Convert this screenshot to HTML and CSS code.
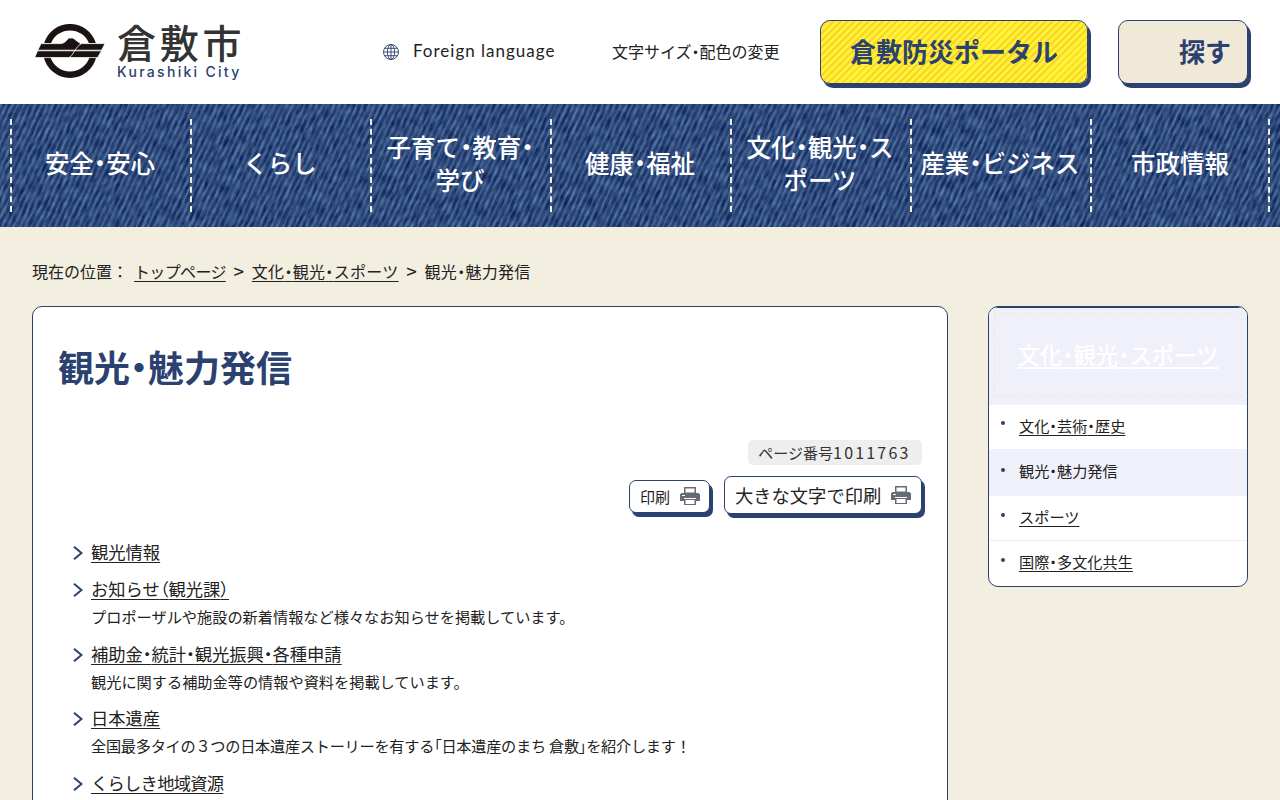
FILE: index.html
```html
<!DOCTYPE html>
<html lang="ja">
<head>
<meta charset="utf-8">
<title>観光・魅力発信</title>
<link rel="stylesheet" href="styles.css">
</head>
<body>
<header class="site-header">
  <a class="logo" href="#">
    <svg class="logo-mark" viewBox="0 0 70 54" width="70" height="54" aria-hidden="true">
      <g fill="#1a1311">
        <path d="M9.200 19A27 27 0 0 1 60.800 19H53.900A20.500 20.500 0 0 0 16.100 19Z"/>
        <path d="M8.700 33H15.400A20.500 20.500 0 0 0 54.600 33H61.300A27 27 0 0 1 8.700 33Z"/>
      </g>
      <g fill="#1a1311" stroke="#fff" stroke-width=".8">
        <path d="M41 19.600H70L66.600 26.200H36Z"/>
        <path d="M36 26.800H66.600L62.600 33.600H30Z"/>
        <path d="M6 19.600H25C29 19.600 31 17.500 33.500 14H38L46 20C43.500 21 42 23.500 40 26.200H2.800Z"/>
        <path d="M2.600 26.800H39.500C38 29.500 36 33.600 33 33.600H-.4Z"/>
      </g>
    </svg>
    <span class="logo-text">
      <span class="logo-ja">倉敷市</span>
      <span class="logo-en">Kurashiki City</span>
    </span>
  </a>
  <a class="foreign" href="#">
    <svg viewBox="0 0 16 16" width="16" height="16" aria-hidden="true" class="globe">
      <g fill="none" stroke="#2b4170" stroke-width=".9">
        <circle cx="8" cy="8" r="7.500"/>
        <ellipse cx="8" cy="8" rx="3.600" ry="7.500"/>
        <path d="M8 .5V15.500M.5 8H15.500M1.600 4.300H14.400M1.600 11.700H14.400"/>
      </g>
    </svg>
    <span>Foreign language</span>
  </a>
  <a class="textsize" href="#">文字サイズ<span class="p">・</span>配色の変更</a>
  <a class="btn-portal" href="#">倉敷防災ポータル</a>
  <a class="btn-search" href="#">探す</a>
</header>

<nav class="gnav">
  <svg class="denim" aria-hidden="true">
    <defs>
      <filter id="denim-noise" x="0" y="0" width="100%" height="100%" color-interpolation-filters="sRGB">
        <feTurbulence type="fractalNoise" baseFrequency="0.3 0.09" numOctaves="3" seed="7"/>
        <feColorMatrix type="matrix" values=".42 0 0 0 -.04  .46 0 0 0 .05  .42 0 0 0 .27  0 0 0 0 1"/>
      </filter>
      <pattern id="twill" width="5.300" height="40" patternUnits="userSpaceOnUse">
        <rect x="0" y="0" width="1.500" height="40" fill="#8fb0d6" fill-opacity=".28"/>
        <rect x="2.800" y="0" width="1.800" height="40" fill="#0f2450" fill-opacity=".32"/>
      </pattern>
    </defs>
    <g transform="rotate(25)">
      <rect x="-200" y="-800" width="1800" height="1400" filter="url(#denim-noise)"/>
      <rect x="-200" y="-800" width="1800" height="1400" fill="url(#twill)"/>
    </g>
  </svg>
  <a href="#"><span>安全<span class="p">・</span>安心</span></a>
  <a href="#"><span>くらし</span></a>
  <a href="#"><span>子育て<span class="p">・</span>教育<span class="p">・</span><br>学び</span></a>
  <a href="#"><span>健康<span class="p">・</span>福祉</span></a>
  <a href="#"><span>文化<span class="p">・</span>観光<span class="p">・</span>ス<br>ポーツ</span></a>
  <a href="#"><span>産業<span class="p">・</span>ビジネス</span></a>
  <a href="#"><span>市政情報</span></a>
</nav>

<main class="page">
  <div class="crumbs">
    <span>現在の位置：</span>
    <a class="top" href="#">トップページ</a>
    <span class="sep">&gt;</span>
    <a class="sec" href="#">文化<span class="p">・</span>観光<span class="p">・</span>スポーツ</a>
    <span class="sep">&gt;</span>
    <span class="here">観光<span class="p">・</span>魅力発信</span>
  </div>
  <div class="columns">
    <article class="content">
      <h1>観光<span class="p">・</span>魅力発信</h1>
      <div class="page-no-row"><span class="page-no">ページ番号<span class="num">1011763</span></span></div>
      <div class="print-row">
        <a class="print small" href="#">印刷
          <svg class="printer" viewBox="0 0 20 18" width="20" height="18" aria-hidden="true"><path d="M4 0H16V6H4ZM5.500 1.500V5.500H14.500V1.500Z" fill="#666c75" fill-rule="evenodd"/><path d="M2 6H18C19 6 20 7 20 8V14H16V11H4V14H0V8C0 7 1 6 2 6Z" fill="#666c75"/><path d="M4 12H16V18H4ZM5.500 13V17H14.500V13Z" fill="#666c75" fill-rule="evenodd"/><path d="M2 8H5V9H2Z" fill="#fff"/></svg>
        </a>
        <a class="print large" href="#">大きな文字で印刷
          <svg class="printer" viewBox="0 0 20 18" width="20" height="18" aria-hidden="true"><path d="M4 0H16V6H4ZM5.500 1.500V5.500H14.500V1.500Z" fill="#666c75" fill-rule="evenodd"/><path d="M2 6H18C19 6 20 7 20 8V14H16V11H4V14H0V8C0 7 1 6 2 6Z" fill="#666c75"/><path d="M4 12H16V18H4ZM5.500 13V17H14.500V13Z" fill="#666c75" fill-rule="evenodd"/><path d="M2 8H5V9H2Z" fill="#fff"/></svg>
        </a>
      </div>
      <ul class="links">
        <li><svg class="chev" viewBox="0 0 10 14" width="10" height="14" aria-hidden="true"><path d="M1 .8L8.500 7L1 13.200" fill="none" stroke="#2b4170" stroke-width="2"/></svg><a href="#">観光情報</a></li>
        <li><svg class="chev" viewBox="0 0 10 14" width="10" height="14" aria-hidden="true"><path d="M1 .8L8.500 7L1 13.200" fill="none" stroke="#2b4170" stroke-width="2"/></svg><a href="#">お知らせ<span class="p">（</span>観光課<span class="p">）</span></a><p>プロポーザルや施設の新着情報など様々なお知らせを掲載しています。</p></li>
        <li><svg class="chev" viewBox="0 0 10 14" width="10" height="14" aria-hidden="true"><path d="M1 .8L8.500 7L1 13.200" fill="none" stroke="#2b4170" stroke-width="2"/></svg><a href="#">補助金<span class="p">・</span>統計<span class="p">・</span>観光振興<span class="p">・</span>各種申請</a><p>観光に関する補助金等の情報や資料を掲載しています。</p></li>
        <li><svg class="chev" viewBox="0 0 10 14" width="10" height="14" aria-hidden="true"><path d="M1 .8L8.500 7L1 13.200" fill="none" stroke="#2b4170" stroke-width="2"/></svg><a href="#">日本遺産</a><p class="tight">全国最多タイの３つの日本遺産ストーリーを有する<span class="p">「</span>日本遺産のまち 倉敷<span class="p">」</span>を紹介します！</p></li>
        <li><svg class="chev" viewBox="0 0 10 14" width="10" height="14" aria-hidden="true"><path d="M1 .8L8.500 7L1 13.200" fill="none" stroke="#2b4170" stroke-width="2"/></svg><a class="narrow" href="#">くらしき地域資源</a></li>
      </ul>
    </article>
    <aside class="side">
      <div class="side-head"><div class="side-head-inner"><a href="#">文化<span class="p">・</span>観光<span class="p">・</span>スポーツ</a></div></div>
      <ul class="side-list">
        <li class="first"><a href="#">文化<span class="p">・</span>芸術<span class="p">・</span>歴史</a></li>
        <li class="current"><span>観光<span class="p">・</span>魅力発信</span></li>
        <li class="ruled"><a href="#">スポーツ</a></li>
        <li><a href="#">国際<span class="p">・</span>多文化共生</a></li>
      </ul>
    </aside>
  </div>
</main>
</body>
</html>
```
FILE: styles.css
```css
* { box-sizing: border-box; }
html, body { margin: 0; height: 800px; overflow: hidden; }
body {
  background: #f2eee0;
  color: #222;
  font-family: "Noto Sans CJK JP", "Noto Sans", sans-serif;
  font-size: 16px;
}
a { color: inherit; }
.p { font-feature-settings: "palt"; }
.site-header {
  height: 104px;
  background: #fff;
  display: flex;
  align-items: center;
  padding: 0 30px 0 35px;
}
.logo { display: flex; align-items: center; gap: 12px; text-decoration: none; width: 348px; }
.logo-mark { flex: none; margin-top: -2px; }
.logo-text { display: flex; flex-direction: column; margin-top: -3px; }
.logo-ja { font-size: 39px; line-height: 42px; letter-spacing: 3.700px; color: #333; font-weight: 500; }
.logo-en { font-family: "Inter", sans-serif; font-size: 14px; line-height: 18px; letter-spacing: 2.300px; color: #2b4170; font-weight: 500; margin-top: 1px; }
.foreign { display: flex; align-items: center; gap: 14px; text-decoration: none; font-family: "Lato", sans-serif; font-size: 17px; letter-spacing: 1px; width: 229px; }
.foreign span { margin-top: -3px; }
.globe { flex: none; }
.textsize { text-decoration: none; font-size: 16px; width: 208px; margin-top: -3px; }
.btn-portal, .btn-search {
  height: 64px;
  border: 1px solid #2b4170;
  border-radius: 10px;
  box-shadow: 3px 4px 0 #2b4170;
  display: flex;
  align-items: center;
  text-decoration: none;
  color: #2b4170;
  font-weight: 700;
  font-size: 26px;
  padding-bottom: 4px;
}
.btn-portal {
  width: 268px;
  justify-content: center;
  background: repeating-linear-gradient(135deg, #fff233 0 3px, #f7d52e 3px 5px);
}
.btn-search {
  width: 130px;
  margin-left: 30px;
  justify-content: flex-end;
  padding-right: 16px;
  background: #f0e9d8;
}
.gnav {
  position: relative;
  height: 123px;
  padding: 15px 10px;
  display: grid;
  grid-template-columns: repeat(7, minmax(0, 1fr));
  grid-template-rows: 93px;
  background-color: #27497d;
  overflow: hidden;
}
.denim { position: absolute; left: 0; top: 0; width: 100%; height: 100%; }
.gnav a {
  position: relative;
  display: flex;
  align-items: center;
  justify-content: center;
  text-align: center;
  text-decoration: none;
  color: #fff;
  font-size: 24.500px;
  line-height: 33px;
  font-weight: 500;
  border-left: 2px dashed #f2eee0;
  padding: 0 4px 6px 2px;
  white-space: nowrap;
}
.gnav a:last-child { border-right: 2px dashed #f2eee0; padding-right: 2px; }
.page { padding: 32px 32px 0; }
.crumbs { display: flex; align-items: center; height: 24px; font-size: 16px; gap: 7px; margin-bottom: 23px; }
.crumbs > span:first-child { margin-right: -1px; }
.crumbs a { text-underline-offset: 3px; }
.crumbs .top { letter-spacing: -.65px; }
.crumbs .sec { letter-spacing: .3px; }
.crumbs .here { letter-spacing: .3px; }
.crumbs .sep { font-size: 19px; width: 12px; text-align: center; line-height: 24px; }
.columns { display: flex; gap: 40px; align-items: flex-start; }
.content {
  flex: none;
  width: 916px;
  height: 640px;
  background: #fff;
  border: 1px solid #2b4170;
  border-radius: 10px;
  padding: 34px 25px 0;
}
h1 { margin: 0; font-size: 36px; line-height: 50px; font-weight: 700; color: #2b4170; }
.page-no-row { display: flex; justify-content: flex-end; margin-top: 49px; }
.page-no { background: #eee; border-radius: 5px; font-size: 15px; line-height: 25px; padding: 0 10px; color: #333; white-space: nowrap; }
.num { font-size: 16px; letter-spacing: 2.200px; margin-right: 1.400px; }
.print-row { display: flex; justify-content: flex-end; align-items: center; gap: 14px; margin-top: 11px; }
.print {
  display: flex;
  align-items: center;
  background: #fff;
  border: 1px solid #2b4170;
  border-radius: 7px;
  box-shadow: 3px 4px 0 #2b4170;
  text-decoration: none;
  justify-content: space-between;
}
.print.small { width: 81px; height: 33px; font-size: 15px; padding: 0 9px 0 10px; margin-top: 2px; }
.print.large { width: 198px; height: 38px; font-size: 18.300px; padding: 0 10px; }
.links { list-style: none; margin: 25px 0 0; padding: 0 0 0 33px; }
.links li { position: relative; margin-bottom: 12px; }
.chev { position: absolute; left: -18px; top: 7px; }
.links a { font-size: 17.300px; line-height: 25px; text-underline-offset: 3px; display: inline-block; }
.links a.narrow { letter-spacing: -.75px; }
.links p { margin: 3px 0 0; font-size: 15.200px; line-height: 24.500px; }
.links p.tight { letter-spacing: -.27px; }
.side {
  flex: none;
  width: 260px;
  background: #fff;
  border: 1px solid #2b4170;
  border-radius: 10px;
  overflow: hidden;
}
.side-head {
  height: 98px;
  background: #f0f0fa;
  border-top: 1px solid #2b4170;
  padding: 5px 5px 8px;
  display: flex;
}
.side-head-inner {
  flex: 1;
  border: 1px dashed #efe9d2;
  display: flex;
  align-items: center;
  justify-content: center;
  color: #fff;
  font-size: 22.400px;
  font-weight: 500;
  padding-bottom: 3px;
}
.side-head a { text-underline-offset: 3px; }
.side-list { list-style: none; margin: 0; padding: 0; font-size: 15.200px; }
.side-list li { position: relative; height: 45px; padding: 8px 0 0 30px; line-height: 24px; }
.side-list li::before {
  content: "";
  position: absolute;
  left: 12px;
  top: 17px;
  width: 4px;
  height: 4px;
  border-radius: 50%;
  background: #2b4170;
}
.side-list a { text-underline-offset: 3px; }
.side-list .first { height: 44px; padding-top: 8px; }
.side-list .first::before { top: 16px; }
.side-list .current { background: #f0f0fa; height: 47px; padding-top: 9px; }
.side-list .current::before { top: 19px; }
.side-list .ruled { border-bottom: 1px solid #eee; }
```
